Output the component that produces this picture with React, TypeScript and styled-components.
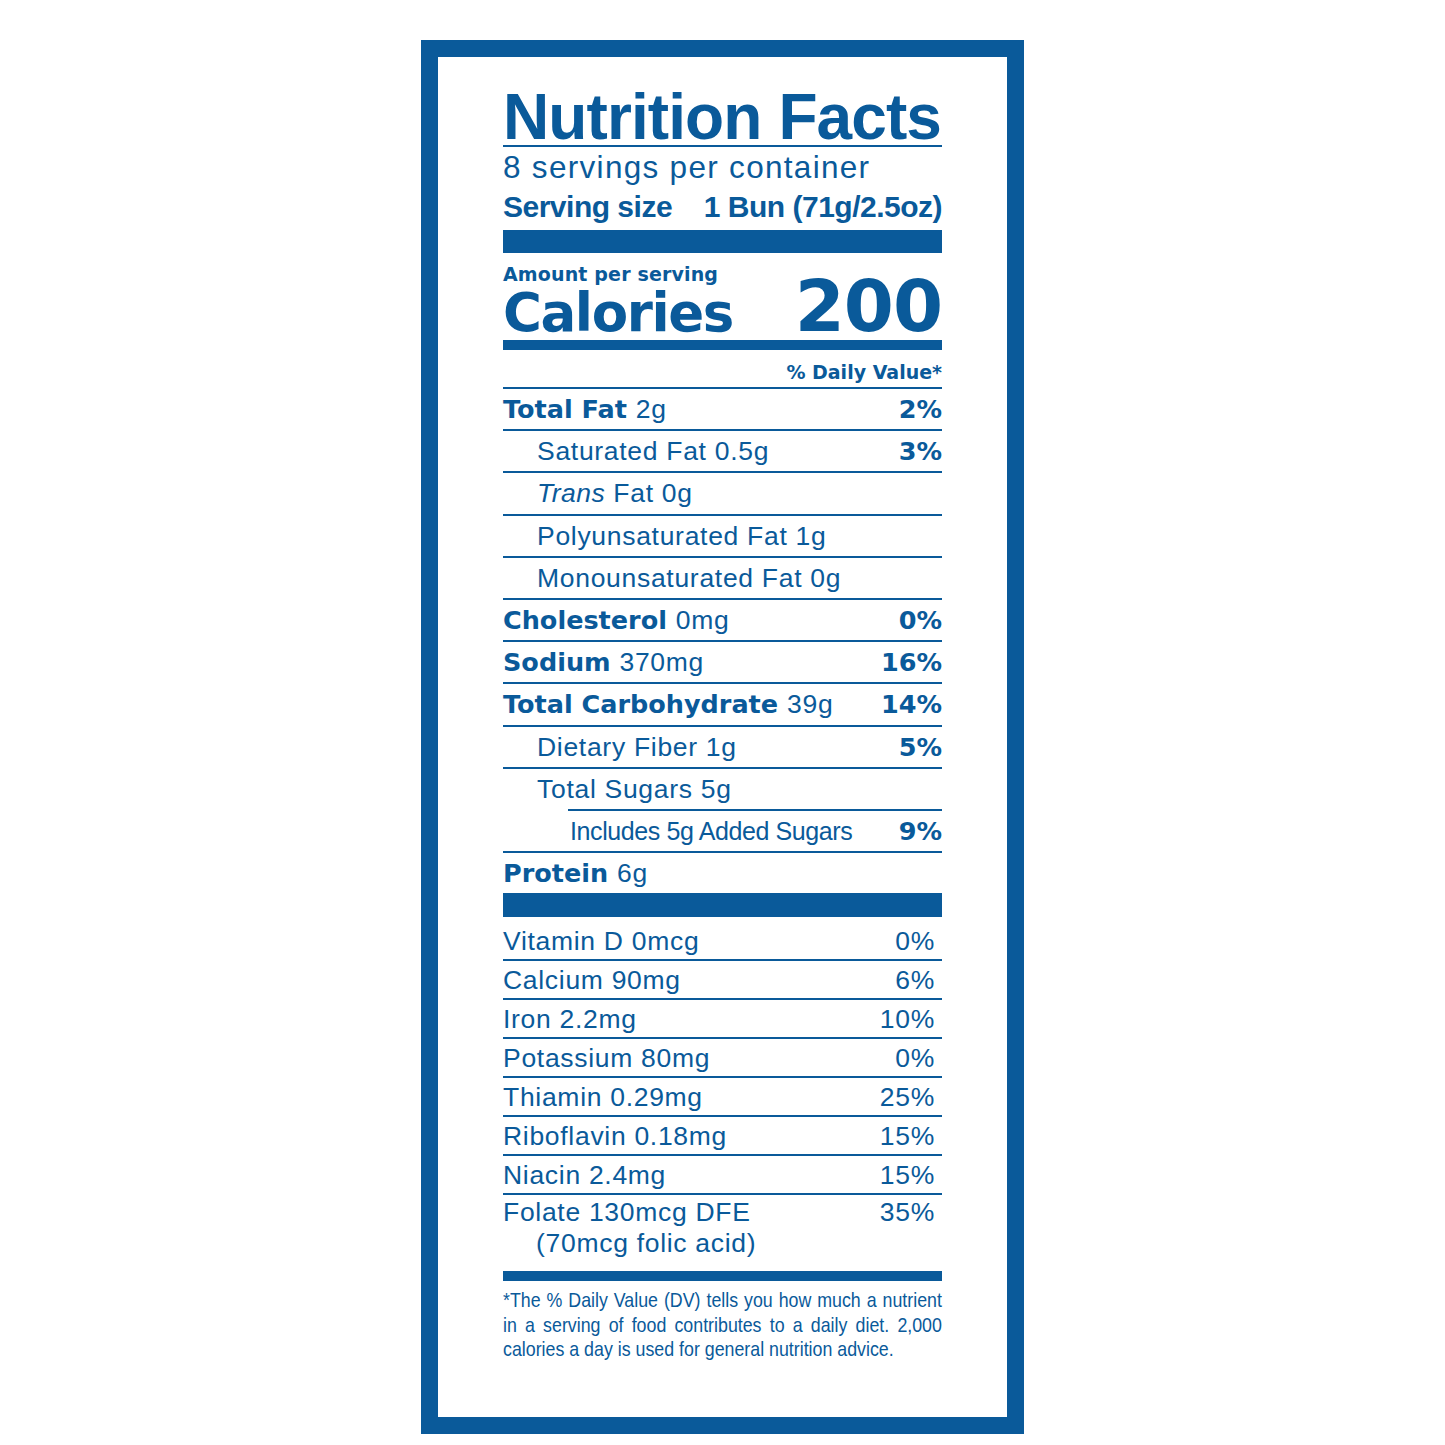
import React from 'react';
import styled, { createGlobalStyle } from 'styled-components';

const BLUE = '#0a5a9a';
const SANS = `"Liberation Sans", Arial, Helvetica, sans-serif`;
const HEAVY = `"DejaVu Sans", Verdana, sans-serif`;

const Global = createGlobalStyle`
  html, body { margin: 0; padding: 0; background: #ffffff; }
  body { font-family: ${SANS}; color: ${BLUE}; }
`;

const Page = styled.div`
  display: flex;
  justify-content: center;
  padding-top: 40px;
`;

const Frame = styled.section`
  width: 603px;
  box-sizing: border-box;
  border: 17px solid ${BLUE};
  padding: 32px 65px 55px;
  background: #ffffff;
  display: flex;
  flex-direction: column;
`;

const Title = styled.h1`
  margin: 0;
  font-family: ${SANS};
  font-weight: 700;
  font-size: 64px;
  line-height: 56px;
  letter-spacing: -0.9px;
  white-space: nowrap;
  border-bottom: 2px solid ${BLUE};
`;

const Servings = styled.div`
  font-size: 31.5px;
  line-height: 40px;
  letter-spacing: 1.3px;
  white-space: nowrap;
`;

const ServingSize = styled.div`
  display: flex;
  justify-content: space-between;
  font-weight: 700;
  font-size: 30px;
  line-height: 39px;
  letter-spacing: -0.5px;
  white-space: nowrap;
`;

const Bar = styled.div<{ $h: number; $mt?: number }>`
  height: ${(p) => p.$h}px;
  margin-top: ${(p) => p.$mt ?? 0}px;
  background: ${BLUE};
  flex: none;
`;

const CaloriesBlock = styled.div`
  display: flex;
  justify-content: space-between;
  align-items: last baseline;
  margin-top: 10px;
  font-family: ${HEAVY};
  font-weight: 700;
`;

const CaloriesLeft = styled.div`
  display: flex;
  flex-direction: column;
`;

const AmountLabel = styled.div`
  font-size: 19px;
  line-height: 23px;
  letter-spacing: 0.15px;
`;

const CaloriesLabel = styled.div`
  font-size: 53px;
  line-height: 54px;
  letter-spacing: -1.4px;
`;

const CaloriesValue = styled.div`
  font-size: 72px;
  line-height: 64px;
  letter-spacing: -1px;
`;

const DailyValueHead = styled.div`
  text-align: right;
  font-family: ${HEAVY};
  font-weight: 700;
  font-size: 19px;
  line-height: 29px;
  padding-top: 8px;
  height: 37px;
  box-sizing: border-box;
`;

const NutrientRow = styled.div<{ $indent?: number; $inset?: number }>`
  display: flex;
  justify-content: space-between;
  align-items: center;
  height: 42.2px;
  box-sizing: border-box;
  border-top: 2px solid ${BLUE};
  margin-left: ${(p) => p.$inset ?? 0}px;
  padding-left: ${(p) => p.$indent ?? 0}px;
  font-size: 26.5px;
  line-height: 30px;
  white-space: nowrap;
`;

const Regular = styled.span<{ $condensed?: boolean }>`
  font-family: ${SANS};
  font-weight: 400;
  letter-spacing: ${(p) => (p.$condensed ? '-0.4px' : '0.7px')};
  font-size: ${(p) => (p.$condensed ? '25px' : '26.5px')};
`;

const Italic = styled.span`
  font-style: italic;
  letter-spacing: 0.5px;
`;

const Strong = styled.span`
  font-family: ${HEAVY};
  font-weight: 700;
  font-size: 25.5px;
`;

const Percent = styled.span`
  font-family: ${HEAVY};
  font-weight: 700;
  font-size: 25.5px;
`;

const VitaminRow = styled.div<{ $first?: boolean; $tall?: boolean }>`
  display: flex;
  justify-content: space-between;
  align-items: ${(p) => (p.$tall ? 'flex-start' : 'center')};
  box-sizing: border-box;
  height: ${(p) => (p.$first ? 42 : p.$tall ? 78 : 39)}px;
  border-top: ${(p) => (p.$first ? 'none' : `2px solid ${BLUE}`)};
  padding-top: ${(p) => (p.$first ? 6 : p.$tall ? 2 : 0)}px;
  font-size: 26.5px;
  line-height: ${(p) => (p.$tall ? 31 : 30)}px;
  letter-spacing: 0.7px;
  white-space: nowrap;
`;

const VitaminName = styled.div`
  display: flex;
  flex-direction: column;
`;

const SubLine = styled.span`
  padding-left: 33px;
`;

const VitaminPct = styled.span`
  padding-right: 7px;
`;

/* condensed face emulated: laid out 508px wide, drawn at 0.864 width = 439px */
const Footnote = styled.div`
  margin-top: 7px;
  width: 508px;
  font-size: 20.6px;
  line-height: 24.5px;
  transform: scaleX(0.864);
  transform-origin: left top;
`;

const FootLine = styled.div<{ $justify?: boolean }>`
  text-align: left;
  text-align-last: ${(p) => (p.$justify ? 'justify' : 'left')};
`;

const vitamins: [string, string][] = [
  ['Vitamin D 0mcg', '0%'],
  ['Calcium 90mg', '6%'],
  ['Iron 2.2mg', '10%'],
  ['Potassium 80mg', '0%'],
  ['Thiamin 0.29mg', '25%'],
  ['Riboflavin 0.18mg', '15%'],
  ['Niacin 2.4mg', '15%'],
];

export default function App() {
  return (
    <>
      <Global />
      <Page>
        <Frame>
          <Title>Nutrition Facts</Title>
          <Servings>8 servings per container</Servings>
          <ServingSize>
            <span>Serving size</span>
            <span>1 Bun (71g/2.5oz)</span>
          </ServingSize>
          <Bar $h={23} $mt={4} />
          <CaloriesBlock>
            <CaloriesLeft>
              <AmountLabel>Amount per serving</AmountLabel>
              <CaloriesLabel>Calories</CaloriesLabel>
            </CaloriesLeft>
            <CaloriesValue>200</CaloriesValue>
          </CaloriesBlock>
          <Bar $h={10} />
          <DailyValueHead>% Daily Value*</DailyValueHead>

          <NutrientRow>
            <span>
              <Strong>Total Fat </Strong>
              <Regular>2g</Regular>
            </span>
            <Percent>2%</Percent>
          </NutrientRow>
          <NutrientRow $indent={34}>
            <Regular>Saturated Fat 0.5g</Regular>
            <Percent>3%</Percent>
          </NutrientRow>
          <NutrientRow $indent={34}>
            <Regular>
              <Italic>Trans</Italic> Fat 0g
            </Regular>
          </NutrientRow>
          <NutrientRow $indent={34}>
            <Regular>Polyunsaturated Fat 1g</Regular>
          </NutrientRow>
          <NutrientRow $indent={34}>
            <Regular>Monounsaturated Fat 0g</Regular>
          </NutrientRow>
          <NutrientRow>
            <span>
              <Strong>Cholesterol </Strong>
              <Regular>0mg</Regular>
            </span>
            <Percent>0%</Percent>
          </NutrientRow>
          <NutrientRow>
            <span>
              <Strong>Sodium </Strong>
              <Regular>370mg</Regular>
            </span>
            <Percent>16%</Percent>
          </NutrientRow>
          <NutrientRow>
            <span>
              <Strong>Total Carbohydrate </Strong>
              <Regular>39g</Regular>
            </span>
            <Percent>14%</Percent>
          </NutrientRow>
          <NutrientRow $indent={34}>
            <Regular>Dietary Fiber 1g</Regular>
            <Percent>5%</Percent>
          </NutrientRow>
          <NutrientRow $indent={34}>
            <Regular>Total Sugars 5g</Regular>
          </NutrientRow>
          <NutrientRow $inset={65} $indent={2}>
            <Regular $condensed>Includes 5g Added Sugars</Regular>
            <Percent>9%</Percent>
          </NutrientRow>
          <NutrientRow>
            <span>
              <Strong>Protein </Strong>
              <Regular>6g</Regular>
            </span>
          </NutrientRow>

          <Bar $h={24} />

          {vitamins.map(([name, pct], i) => (
            <VitaminRow key={name} $first={i === 0}>
              <span>{name}</span>
              <VitaminPct>{pct}</VitaminPct>
            </VitaminRow>
          ))}
          <VitaminRow $tall>
            <VitaminName>
              <span>Folate 130mcg DFE</span>
              <SubLine>(70mcg folic acid)</SubLine>
            </VitaminName>
            <VitaminPct>35%</VitaminPct>
          </VitaminRow>

          <Bar $h={10} />
          <Footnote>
            <FootLine $justify>*The % Daily Value (DV) tells you how much a nutrient</FootLine>
            <FootLine $justify>in a serving of food contributes to a daily diet. 2,000</FootLine>
            <FootLine>calories a day is used for general nutrition advice.</FootLine>
          </Footnote>
        </Frame>
      </Page>
    </>
  );
}
